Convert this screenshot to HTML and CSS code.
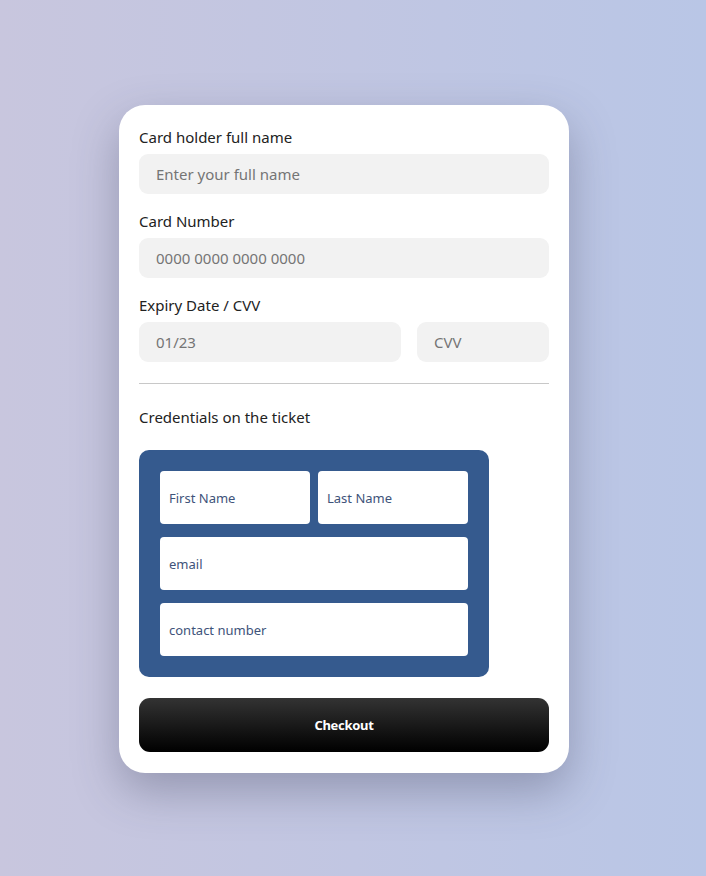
FILE: index.html
```html
<!DOCTYPE html>
<html lang="en">
<head>
<meta charset="utf-8">
<title>Checkout</title>
<link rel="stylesheet" href="styles.css">
</head>
<body>
<main class="card">
  <label class="label">Card holder full name</label>
  <div class="field">Enter your full name</div>

  <label class="label">Card Number</label>
  <div class="field">0000 0000 0000 0000</div>

  <label class="label">Expiry Date / CVV</label>
  <div class="row">
    <div class="field field-grow">01/23</div>
    <div class="field field-cvv">CVV</div>
  </div>

  <hr class="divider">

  <p class="label section-label">Credentials on the ticket</p>

  <div class="ticket">
    <div class="ticket-row">
      <div class="tfield">First Name</div>
      <div class="tfield">Last Name</div>
    </div>
    <div class="tfield">email</div>
    <div class="tfield">contact number</div>
  </div>

  <button class="checkout">Checkout</button>
</main>
</body>
</html>
```
FILE: styles.css
```css
* { box-sizing: border-box; }
html, body { height: 100%; }
body {
  margin: 0;
  min-height: 100vh;
  display: flex;
  align-items: center;
  padding: 2px 0 0 119px;
  background: linear-gradient(90deg, #c8c6de 0%, #c1c6e2 50%, #b9c6e6 100%);
  font-family: "Noto Sans", "Open Sans", sans-serif;
}
.card {
  width: 450px;
  height: 668px;
  background: #fff;
  border-radius: 26px;
  padding: 20px 20px 21px;
  display: flex;
  flex-direction: column;
  box-shadow: 0 18px 45px rgba(60, 62, 90, 0.35);
}
.label {
  display: block;
  margin: 0 0 5px;
  font-size: 15px;
  line-height: 24px;
  color: #222;
}
.field {
  height: 40px;
  border-radius: 9px;
  background: #f2f2f2;
  padding-left: 17px;
  display: flex;
  align-items: center;
  font-size: 15px;
  color: #757575;
  margin-bottom: 15px;
}
.row {
  display: flex;
  gap: 16px;
}
.field-grow { flex: 1; }
.field-cvv { width: 132px; }
.divider {
  border: 0;
  border-top: 1px solid #c8c8c8;
  margin: 6px 0 21px;
}
.section-label { margin-bottom: 21px; }
.ticket {
  width: 350px;
  height: 227px;
  background: #355a8e;
  border-radius: 10px;
  padding: 21px;
  display: flex;
  flex-direction: column;
  gap: 13px;
}
.ticket-row {
  display: flex;
  gap: 8px;
}
.ticket-row .tfield { flex: 1; }
.tfield {
  height: 53px;
  background: #fff;
  border-radius: 4px;
  padding-left: 9px;
  display: flex;
  align-items: center;
  font-size: 13px;
  color: #40537a;
}
.checkout {
  margin-top: 21px;
  height: 54px;
  border: 0;
  border-radius: 11px;
  background: linear-gradient(180deg, #333 0%, #000 100%);
  color: #fff;
  font-family: "Noto Sans", sans-serif;
  font-weight: 700;
  font-size: 13px;
  letter-spacing: -0.3px;
}
```
